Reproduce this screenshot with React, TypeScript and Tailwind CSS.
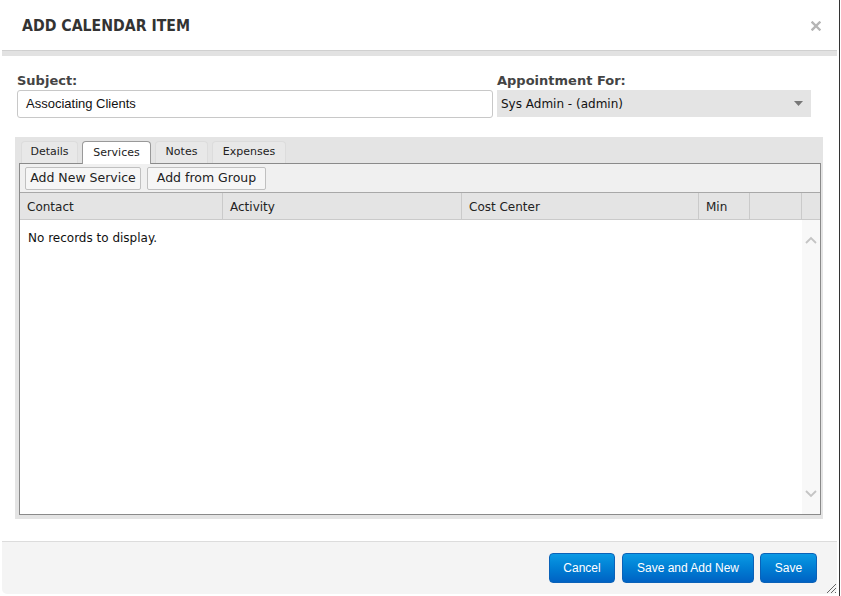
import React from "react";

const verdana = { fontFamily: '"DejaVu Sans", Verdana, sans-serif' };

function Tab({ label, w, active }: { label: string; w: string; active?: boolean }) {
  return (
    <div
      className={
        "h-[22px] flex items-center justify-center text-[11px] text-[#222] rounded-t-[4px] border border-b-0 " +
        w +
        (active ? " bg-white border-[#999] h-[23px] -mb-px relative z-10" : " bg-[#e8e8e8] border-[#dcdcdc]")
      }
      style={verdana}
    >
      {label}
    </div>
  );
}

function BlueButton({ label, w }: { label: string; w: string }) {
  return (
    <button
      className={
        "h-[30px] rounded-[4px] border border-[#0a62b8] bg-gradient-to-b from-[#0c9ae4] to-[#0062c3] text-white text-[12px] flex items-center justify-center " +
        w
      }
      style={{ fontFamily: '"Liberation Sans", Arial, sans-serif' }}
    >
      {label}
    </button>
  );
}

export default function App() {
  return (
    <div className="w-[841px] h-[596px] bg-white flex overflow-hidden">
      <div className="w-[839px] h-full flex flex-col bg-white">
        {/* Header */}
        <div className="h-[50px] flex items-center justify-between pl-[22px] pr-[18px]">
          <div
            className="text-[15.7px] font-bold text-[#333] pt-[1px]"
            style={{ fontFamily: '"Liberation Sans Narrow", "DejaVu Sans Condensed", "Liberation Sans", sans-serif' }}
          >
            ADD CALENDAR ITEM
          </div>
          <svg width="10" height="10" viewBox="0 0 10 10" className="mt-[1px]">
            <path d="M1.5 1.5 L8.5 8.5 M8.5 1.5 L1.5 8.5" stroke="#b5b5b5" strokeWidth="2.4" strokeLinecap="square" />
          </svg>
        </div>
        <div className="ml-[2px] mr-[2px] h-[6px] bg-[#e2e2e2] border-t border-[#d0d0d0]" />

        {/* Fields */}
        <div className="flex pl-[17px] pt-[16px] gap-[4px]">
          <div className="w-[476px] flex flex-col">
            <div className="text-[13px] font-bold text-[#444] leading-[18px]" style={verdana}>
              Subject:
            </div>
            <div
              className="h-[28px] border border-[#c8c8c8] rounded-[3px] flex items-center pl-[8px] text-[13px] text-[#111]"
              style={{ fontFamily: '"Liberation Sans", Arial, sans-serif' }}
            >
              Associating Clients
            </div>
          </div>
          <div className="w-[314px] flex flex-col">
            <div className="text-[13px] font-bold text-[#444] leading-[18px]" style={verdana}>
              Appointment For:
            </div>
            <div className="h-[27px] bg-[#e4e4e4] flex items-center justify-between pl-[4px] pr-[8px] text-[12px] text-[#111]" style={verdana}>
              <span>Sys Admin - (admin)</span>
              <svg width="9" height="5" viewBox="0 0 9 5">
                <path d="M0 0 L9 0 L4.5 5 Z" fill="#777" />
              </svg>
            </div>
          </div>
        </div>

        {/* Tab panel */}
        <div className="ml-[15px] w-[808px] h-[382px] mt-[19px] bg-[#e4e4e4] flex flex-col pt-[4px] pl-[4px] pr-[2px] pb-[4px]">
          <div className="flex gap-[4px] pl-[2px] items-end">
            <Tab label="Details" w="w-[57px]" />
            <Tab label="Services" w="w-[69px]" active />
            <Tab label="Notes" w="w-[53px]" />
            <Tab label="Expenses" w="w-[74px]" />
          </div>
          <div className="flex-1 border border-[#8a8a8a] bg-white flex flex-col">
            <div className="h-[29px] bg-[#f0f0f0] border-b border-[#a8a8a8] flex items-center pl-[5px] gap-[6px]">
              <button className="h-[23px] w-[116px] border border-[#c0c0c0] rounded-[2px] bg-[#f6f6f6] text-[12.5px] text-[#222]" style={verdana}>
                Add New Service
              </button>
              <button className="h-[23px] w-[119px] border border-[#c0c0c0] rounded-[2px] bg-[#f6f6f6] text-[12.5px] text-[#222]" style={verdana}>
                Add from Group
              </button>
            </div>
            <div className="h-[27px] bg-[#e4e4e4] border-b border-[#cacaca] flex text-[12px] text-[#222]" style={verdana}>
              <div className="w-[203px] border-r border-[#cacaca] flex items-center pl-[7px] pt-[1px]">Contact</div>
              <div className="w-[239px] border-r border-[#cacaca] flex items-center pl-[7px] pt-[1px]">Activity</div>
              <div className="w-[237px] border-r border-[#cacaca] flex items-center pl-[7px] pt-[1px]">Cost Center</div>
              <div className="w-[51px] border-r border-[#cacaca] flex items-center pl-[7px] pt-[1px]">Min</div>
              <div className="w-[52px] border-r border-[#cacaca]" />
              <div className="flex-1" />
            </div>
            <div className="flex-1 flex">
              <div className="flex-1 pl-[8px] pt-[9px] text-[12px] text-[#111]" style={verdana}>
                No records to display.
              </div>
              <div className="w-[18px] bg-[#f8f8f8] flex flex-col justify-between items-center pt-[16px] pb-[16px]">
                <svg width="12" height="8" viewBox="0 0 12 8">
                  <path d="M1 7 L6 2 L11 7" stroke="#c4c4c4" strokeWidth="1.8" fill="none" />
                </svg>
                <svg width="12" height="8" viewBox="0 0 12 8">
                  <path d="M1 1 L6 6 L11 1" stroke="#c4c4c4" strokeWidth="1.8" fill="none" />
                </svg>
              </div>
            </div>
          </div>
        </div>

        {/* Footer */}
        <div className="mt-[22px] ml-[2px] mr-[2px] h-[53px] bg-[#f4f4f4] border-t border-[#dcdcdc] rounded-b-[5px] flex items-center justify-end pr-[20px] gap-[6px] relative">
          <BlueButton label="Cancel" w="w-[66px] mr-[1px]" />
          <BlueButton label="Save and Add New" w="w-[132px]" />
          <BlueButton label="Save" w="w-[57px]" />
          <svg width="12" height="12" viewBox="0 0 12 12" className="absolute right-[0px] bottom-[0px]">
            <path d="M11 2 L2 11 M11 6 L6 11 M11 10 L10 11" stroke="#666" strokeWidth="1" />
          </svg>
        </div>
      </div>
      <div className="w-px h-full bg-[#333]" />
      <div className="flex-1 bg-white" />
    </div>
  );
}
